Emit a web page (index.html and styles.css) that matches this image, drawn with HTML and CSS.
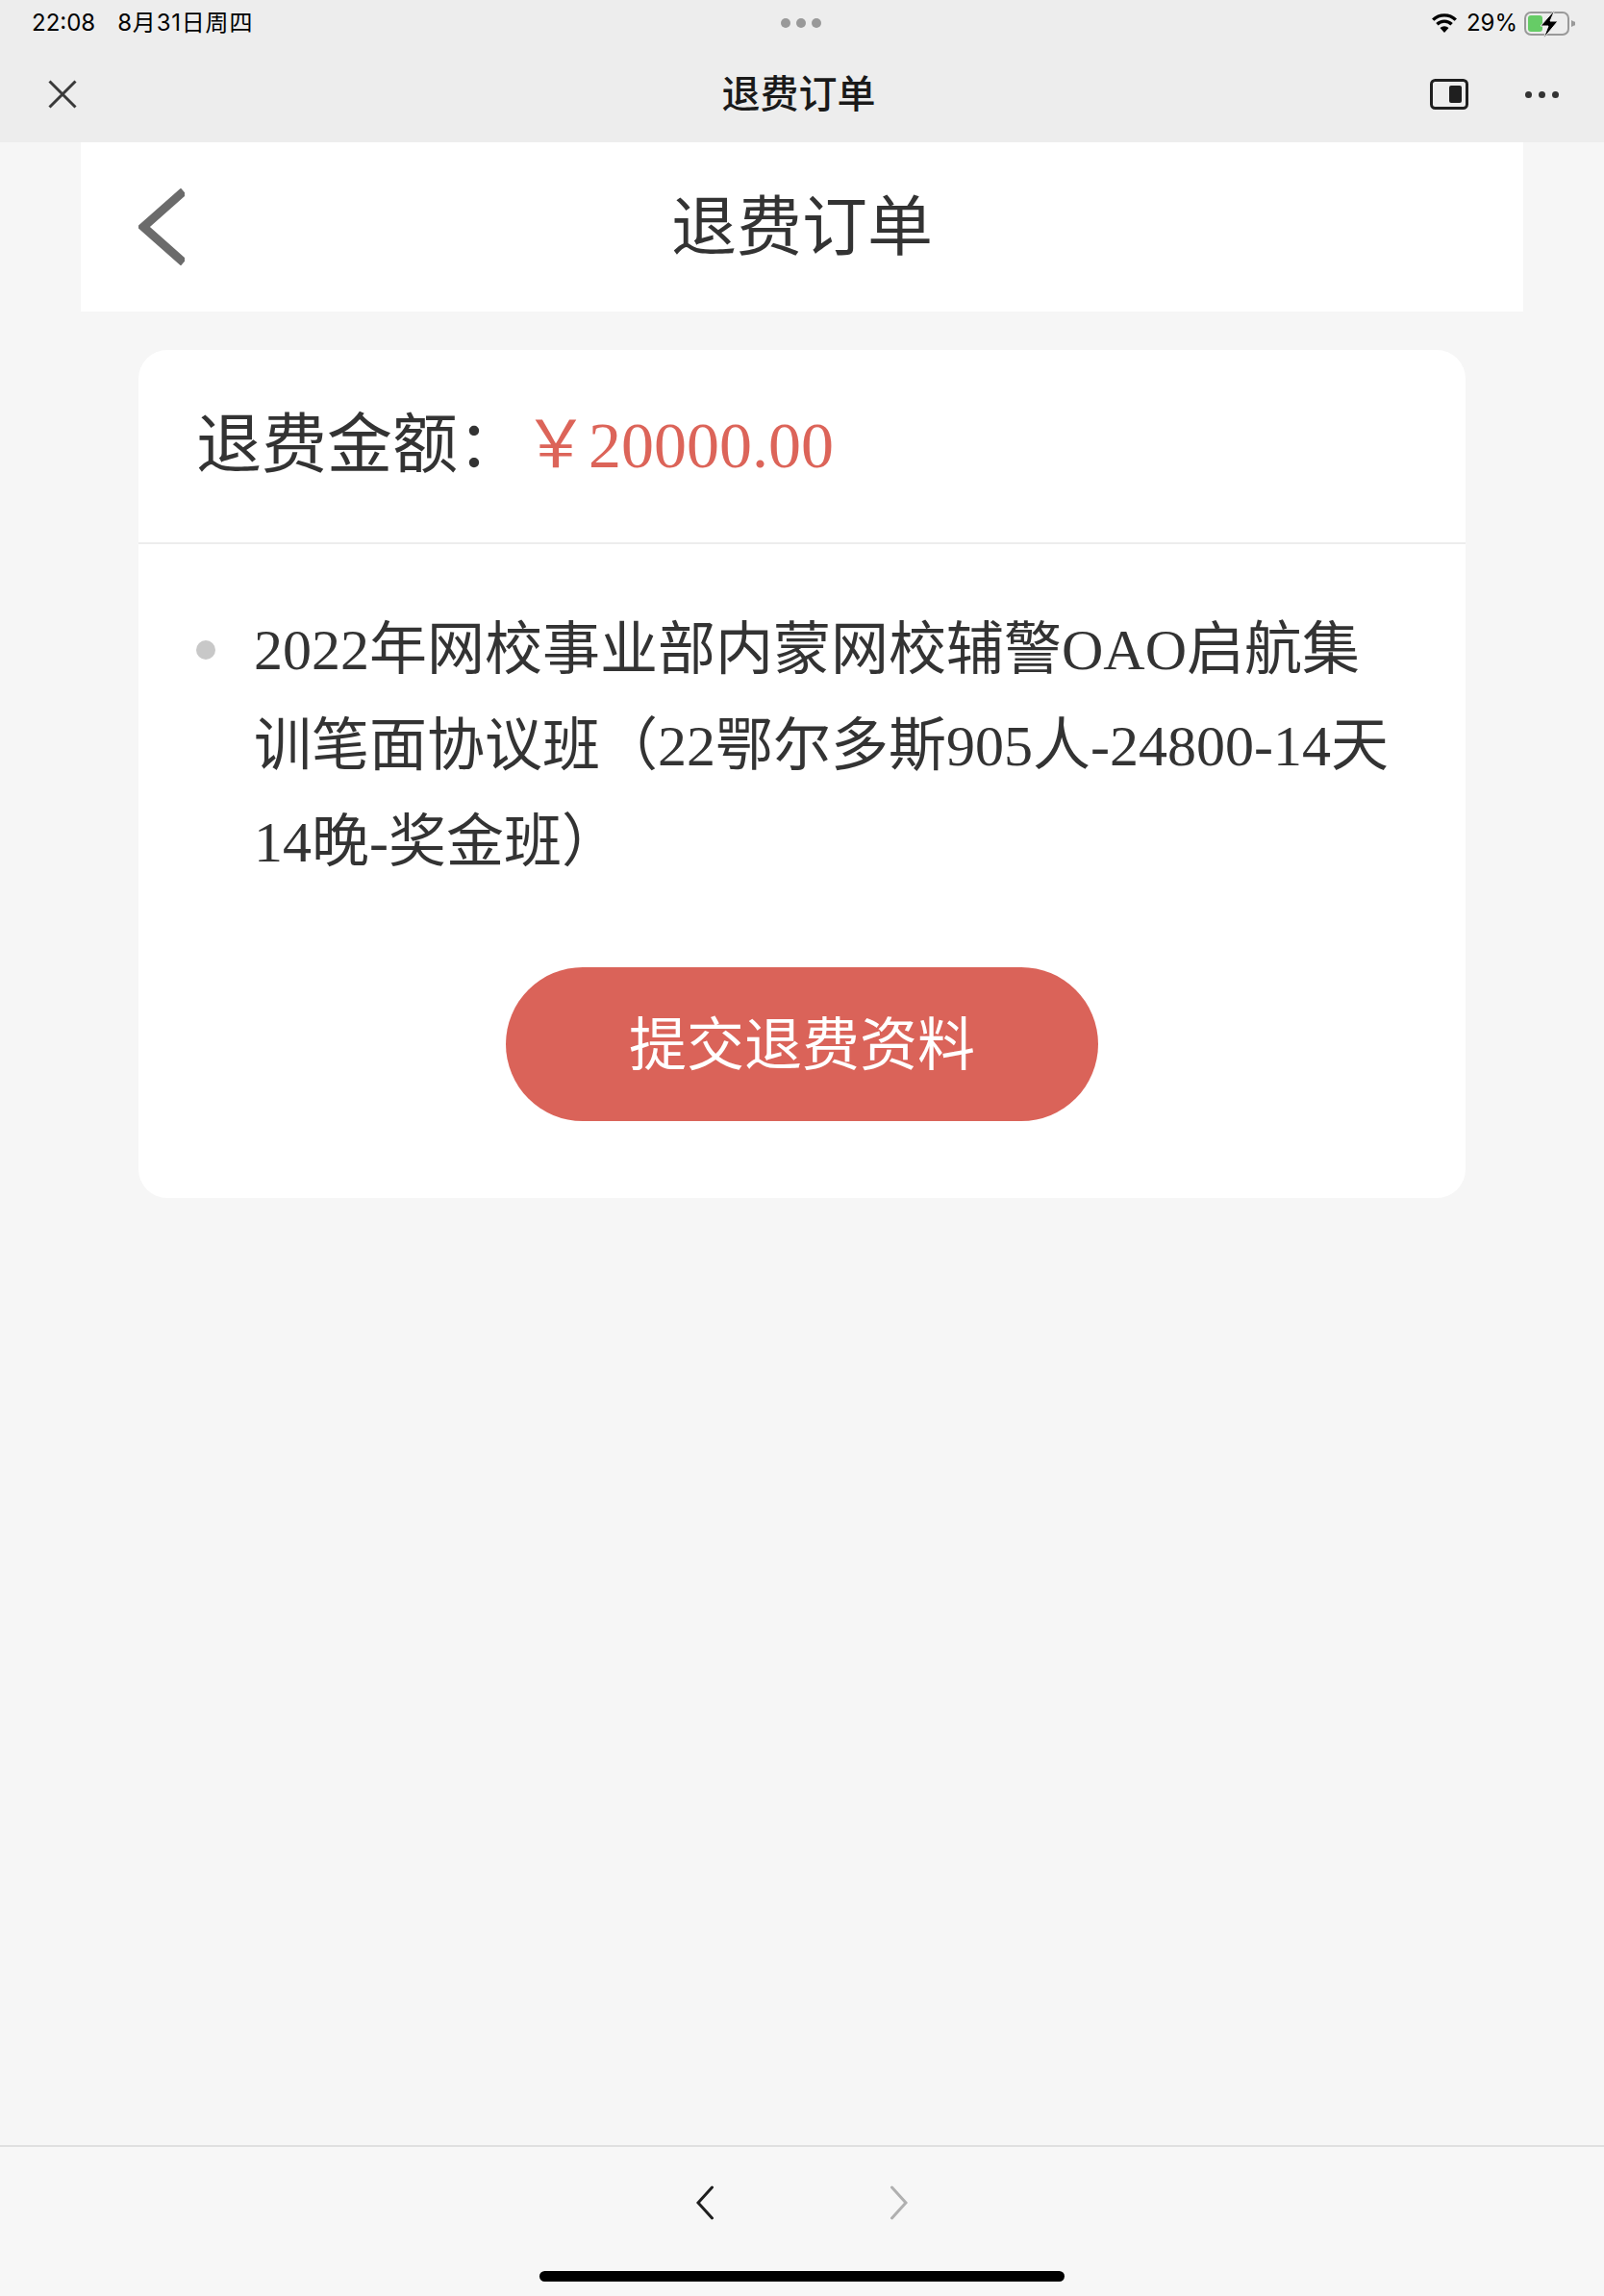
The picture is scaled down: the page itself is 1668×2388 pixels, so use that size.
FILE: index.html
```html
<!DOCTYPE html>
<html lang="zh-CN">
<head>
    <meta charset="UTF-8">
    <meta name="viewport" content="width=device-width, initial-scale=1.0">
    <title>退费订单</title>
    <link rel="stylesheet" href="styles.css">
</head>
<body>
    <div class="top-bar">
        <div class="status-row">
            <div class="status-left">
                <span class="status-time">22:08</span>
                <span class="status-date">8月31日周四</span>
            </div>
            <div class="status-dots"><i></i><i></i><i></i></div>
            <div class="status-right">
                <svg class="icon-wifi" width="26" height="20" viewBox="0 0 26 20">
                    <path d="M13 20l-4.5-5a6.5 6.5 0 0 1 9 0z" fill="#000"/>
                    <path d="M5.4 11.2a11 11 0 0 1 15.2 0" fill="none" stroke="#000" stroke-width="3.4"/>
                    <path d="M1.2 6.6a17 17 0 0 1 23.6 0" fill="none" stroke="#000" stroke-width="3.4"/>
                </svg>
                <span class="status-battery-text">29%</span>
                <svg class="icon-battery" width="53" height="32" viewBox="0 0 53 32">
                    <rect x="1" y="5" width="45" height="23" rx="6" fill="none" stroke="#999" stroke-width="2"/>
                    <rect x="4" y="8" width="15" height="17" rx="3" fill="#66cc66"/>
                    <path d="M49 13l3 1.5a2 2 0 0 1 0 4l-3 1.5z" fill="#999"/>
                    <path d="M32 2L17 19h8l-5 13 15-18h-8z" fill="#000" stroke="#ededed" stroke-width="1"/>
                </svg>
            </div>
        </div>
        <div class="nav-row">
            <div class="nav-left">
                <svg width="30" height="30" viewBox="0 0 30 30">
                    <path d="M1.5 1.5l27 27M28.5 1.5l-27 27" fill="none" stroke="#3a3a3a" stroke-width="3"/>
                </svg>
            </div>
            <div class="nav-title">退费订单</div>
            <div class="nav-right">
                <svg width="40" height="32" viewBox="0 0 40 32">
                    <rect x="1.5" y="1.5" width="37" height="29" rx="4" fill="none" stroke="#1f1f1f" stroke-width="3"/>
                    <rect x="20" y="7" width="13" height="18" rx="2" fill="#1f1f1f"/>
                </svg>
                <div class="more-dots"><i></i><i></i><i></i></div>
            </div>
        </div>
    </div>

    <main class="page">
        <header class="page-header">
            <div class="page-back">
                <svg width="48" height="80" viewBox="0 0 48 80">
                    <path d="M47 3L5 40l42 37" fill="none" stroke="#6b6b6b" stroke-width="9"/>
                </svg>
            </div>
            <h1 class="page-title">退费订单</h1>
            <div></div>
        </header>

        <section class="card">
            <div class="amount-row">
                <span>退费金额</span><span class="amount-colon">&#xFF1A;</span><span class="amount-value">&#xFFE5;20000.00</span>
            </div>
            <div class="card-body">
                <ul class="course-list">
                    <li>2022年网校事业部内蒙网校辅警OAO启航集训笔面协议班&#xFF08;22鄂尔多斯905人-24800-14天14晚-奖金班&#xFF09;</li>
                </ul>
                <button class="submit-btn" type="button">提交退费资料</button>
            </div>
        </section>
    </main>

    <footer class="bottom-bar">
        <div class="bottom-nav">
            <svg width="18" height="36" viewBox="0 0 18 36">
                <path d="M16.5 2L2 18l14.5 16" fill="none" stroke="#1f1f1f" stroke-width="3" stroke-linecap="round"/>
            </svg>
            <svg width="18" height="36" viewBox="0 0 18 36">
                <path d="M1.5 2L16 18 1.5 34" fill="none" stroke="#b0b0b0" stroke-width="3" stroke-linecap="round"/>
            </svg>
        </div>
        <div class="home-bar"></div>
    </footer>
</body>
</html>
```

FILE: styles.css
```css
* {
    box-sizing: border-box;
}
body {
    margin: 0;
    min-height: 100vh;
    display: flex;
    flex-direction: column;
    background-color: #f6f6f6;
    color: #333;
    font-family: "Liberation Serif", "Noto Sans CJK SC", serif;
}

/* browser chrome */
.top-bar {
    height: 148px;
    background-color: #ededed;
    font-family: Inter, "Noto Sans CJK SC", sans-serif;
}
.status-row {
    height: 48px;
    padding: 0 30px 0 33px;
    display: grid;
    grid-template-columns: 1fr auto 1fr;
    align-items: center;
    font-size: 24px;
    line-height: 30px;
    color: #000;
}
.status-left {
    display: flex;
    align-items: baseline;
    gap: 23px;
}
.status-date {
    letter-spacing: 0.8px;
}
.status-dots {
    display: flex;
    gap: 6px;
    margin-right: 6px;
}
.status-dots i {
    width: 10px;
    height: 10px;
    border-radius: 50%;
    background-color: #999;
}
.status-right {
    display: flex;
    justify-content: flex-end;
    align-items: center;
}
.icon-wifi {
    margin-right: 10px;
}
.status-battery-text {
    margin-right: 7px;
}
.nav-row {
    height: 100px;
    padding: 0 47px 0 50px;
    display: grid;
    grid-template-columns: 1fr auto 1fr;
    align-items: center;
}
.nav-left {
    display: flex;
}
.nav-title {
    margin-right: 10px;
    padding-bottom: 6px;
    font-size: 40px;
    font-weight: 500;
    color: #1a1a1a;
    font-family: "Noto Sans CJK SC", sans-serif;
}
.nav-right {
    display: flex;
    justify-content: flex-end;
    align-items: center;
    gap: 59px;
}
.more-dots {
    display: flex;
    gap: 7px;
}
.more-dots i {
    width: 7px;
    height: 7px;
    border-radius: 50%;
    background-color: #333;
}

/* page */
.page {
    flex: 1;
    width: 1500px;
    margin: 0 auto;
}
.page-header {
    height: 176px;
    padding: 0 60px;
    background-color: #fff;
    display: grid;
    grid-template-columns: 1fr auto 1fr;
    align-items: center;
}
.page-back {
    display: flex;
}
.page-title {
    margin: 0;
    padding-bottom: 10px;
    font-size: 68px;
    font-weight: 400;
    line-height: 1;
    font-family: "Noto Sans CJK SC", sans-serif;
}
.card {
    margin: 40px 60px 0;
    background-color: #fff;
    border-radius: 30px;
}
.amount-row {
    height: 202px;
    padding: 0 60px;
    line-height: 186px;
    font-size: 68px;
    border-bottom: 2px solid #ededed;
}
.amount-colon {
    font-family: "Noto Sans CJK TC", sans-serif;
}
.amount-value {
    color: #dc6459;
}
.card-body {
    padding: 60px 60px 80px;
    display: flex;
    flex-direction: column;
    align-items: center;
}
.course-list {
    list-style: none;
    margin: 0 0 80px;
    padding: 0;
    width: 100%;
    font-size: 60px;
    line-height: 100px;
}
.course-list li {
    display: block;
    position: relative;
    padding-left: 60px;
}
.course-list li::before {
    content: "";
    position: absolute;
    left: 0;
    top: 40px;
    width: 20px;
    height: 20px;
    border-radius: 50%;
    background-color: #c8c8c8;
}
.submit-btn {
    width: 616px;
    height: 160px;
    padding: 0 0 10px;
    border: none;
    border-radius: 80px;
    background-color: #da6359;
    color: #fff;
    font-size: 60px;
    font-family: "Noto Sans CJK SC", sans-serif;
}

/* bottom toolbar */
.bottom-bar {
    height: 157px;
    border-top: 2px solid #e0e0e0;
    background-color: #f7f7f7;
    display: flex;
    flex-direction: column;
    align-items: center;
}
.bottom-nav {
    margin-top: 40px;
    display: flex;
    gap: 184px;
}
.home-bar {
    margin-top: 53px;
    width: 546px;
    height: 11px;
    border-radius: 6px;
    background-color: #000;
}
```
